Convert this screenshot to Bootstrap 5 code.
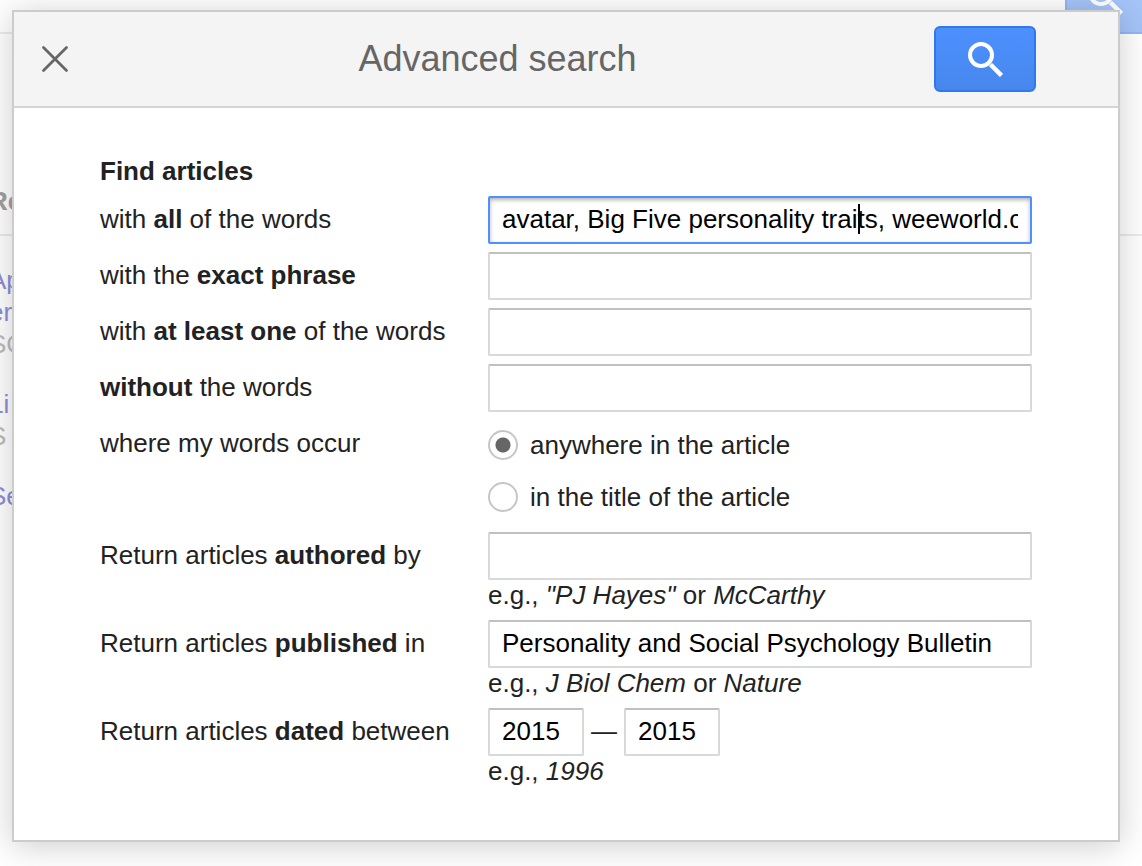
<!DOCTYPE html>
<html lang="en">
<head>
<meta charset="utf-8">
<meta name="viewport" content="width=device-width, initial-scale=1">
<title>Advanced search</title>
<link href="https://cdn.jsdelivr.net/npm/bootstrap@5.3.0/dist/css/bootstrap.min.css" rel="stylesheet">
<style>
  body { font-family: "Liberation Sans", Arial, sans-serif; font-size: 26px; line-height: 30px; color: #222; background: #fff; }

  /* dimmed results page behind the dialog */
  .backpage { z-index: 0; }
  .back-top { height: 34px; border-bottom: 2px solid #ebebeb; }
  .back-search { width: 77px; height: 34px; background: #a5c4f8; border: solid #92b6f5; border-width: 0 0 2px 2px; }
  .back-search svg { display: block; margin: -21px 0 0 20px; }
  .back-heading { padding: 151px 0 17px; border-bottom: 2px solid #ebebeb; font-weight: bold; color: #a0a0a0; }
  .back-list { margin-left: -11px; line-height: 32px; white-space: nowrap; }
  .back-item { padding-top: 28px; color: #bbb; }
  .back-item a { color: #8e8ed6; text-decoration: none; }

  .dialog-box { z-index: 1; margin: 10px 22px 24px 12px; border: 2px solid #ccc; background: #fff; box-shadow: 0 4px 32px rgba(0,0,0,.2); }
  .dialog-head { height: 96px; padding-right: 82px; background: #f4f4f4; border-bottom: 2px solid #d5d5d5; }
  .dialog-title { padding-right: 8px; font-size: 36px; line-height: 48px; font-weight: 400; color: #666; }
  .close-btn { width: 55px; height: 48px; }
  .search-btn { width: 102px; height: 66px; border: 2px solid #3079ed; border-radius: 6px; background: linear-gradient(#4d90fe, #4787ed); }

  .dialog-body { padding: 38px 86px 54px; }
  .form-title { font-size: 26px; line-height: 50px; font-weight: bold; }
  .field-label { flex: 0 0 388px; line-height: 46px; }
  .text-field { height: 48px; padding: 0 12px 2px; border: 2px solid #d9d9d9; border-top-color: #c0c0c0; border-radius: 2px; font-size: 26px; line-height: 30px; color: #000; background: #fff; }
  .text-field:focus { box-shadow: none; }
  .text-field.active-field { border-color: #4d90fe; box-shadow: inset 0 2px 4px rgba(0,0,0,.3); }
  .text-caret { left: 370px; top: 8px; width: 2px; height: 30px; background: #000; }
  .year-field { width: 96px; }
  .year-dash { width: 40px; line-height: 46px; }
  .hint-row { margin-bottom: 10px; }
  .radio-group { padding: 10px 0 20px; gap: 22px; }
  .radio-dot { appearance: none; width: 30px; height: 30px; margin: 0; border: 2px solid #c6c6c6; border-radius: 50%; background: #fff; }
  .radio-dot:checked { background: radial-gradient(circle, #666 0 7px, #fff 8px); }
</style>
</head>
<body class="position-relative overflow-hidden">

<div class="backpage position-absolute top-0 start-0 w-100 h-100 overflow-hidden" aria-hidden="true">
  <div class="back-top d-flex justify-content-end">
    <div class="back-search overflow-hidden">
      <svg width="36" height="36" viewBox="0 0 36 36" fill="none" stroke="#fff"><circle cx="14" cy="14" r="11" stroke-width="4"/><path d="M23.500 23.500L34.500 34.500" stroke-width="4.500"/></svg>
    </div>
  </div>
  <div class="back-list">
    <div class="back-heading">Re</div>
    <div class="back-item"><a href="#" tabindex="-1">Ap</a><br><a href="#" tabindex="-1">er</a><br>SC</div>
    <div class="back-item"><a href="#" tabindex="-1">Li</a><br>S</div>
    <div class="back-item"><a href="#" tabindex="-1">Se</a></div>
  </div>
</div>

<main class="dialog-box position-relative" role="dialog" aria-labelledby="dialog-title">
  <header class="dialog-head d-flex align-items-center">
    <button type="button" class="close-btn btn border-0 p-0 d-flex align-items-center justify-content-end" aria-label="Close">
      <svg width="28" height="28" viewBox="0 0 28 28" stroke="#666" stroke-width="2.800" stroke-linecap="round"><path d="M2.500 2.500L25.500 25.500M25.500 2.500L2.500 25.500"/></svg>
    </button>
    <h1 id="dialog-title" class="dialog-title flex-grow-1 text-center m-0">Advanced search</h1>
    <button type="submit" form="search-form" class="search-btn btn p-0 d-flex align-items-center justify-content-center" aria-label="Search">
      <svg width="36" height="36" viewBox="0 0 36 36" fill="none" stroke="#fff"><circle cx="14" cy="14" r="11" stroke-width="4"/><path d="M23.500 23.500L34.500 34.500" stroke-width="4.500"/></svg>
    </button>
  </header>

  <form id="search-form" class="dialog-body">
    <h2 class="form-title m-0">Find articles</h2>

    <div class="d-flex mb-2">
      <label class="field-label" for="all">with <b>all</b> of the words</label>
      <div class="position-relative flex-grow-1">
        <input id="all" type="text" class="form-control text-field active-field" value="avatar, Big Five personality traits, weeworld.com">
        <span class="text-caret position-absolute"></span>
      </div>
    </div>
    <div class="d-flex mb-2">
      <label class="field-label" for="exact">with the <b>exact phrase</b></label>
      <input id="exact" type="text" class="form-control text-field">
    </div>
    <div class="d-flex mb-2">
      <label class="field-label" for="any">with <b>at least one</b> of the words</label>
      <input id="any" type="text" class="form-control text-field">
    </div>
    <div class="d-flex mb-2">
      <label class="field-label" for="none"><b>without</b> the words</label>
      <input id="none" type="text" class="form-control text-field">
    </div>

    <div class="d-flex" role="radiogroup" aria-labelledby="occur">
      <span id="occur" class="field-label">where my words occur</span>
      <div class="radio-group d-flex flex-column">
        <label class="d-flex"><input type="radio" name="occurs" class="radio-dot me-2" checked><span class="ps-1">anywhere in the article</span></label>
        <label class="d-flex"><input type="radio" name="occurs" class="radio-dot me-2"><span class="ps-1">in the title of the article</span></label>
      </div>
    </div>

    <div class="d-flex hint-row">
      <label class="field-label" for="author">Return articles <b>authored</b> by</label>
      <div class="flex-grow-1">
        <input id="author" type="text" class="form-control text-field">
        <div>e.g., <i>"PJ Hayes"</i> or <i>McCarthy</i></div>
      </div>
    </div>
    <div class="d-flex hint-row">
      <label class="field-label" for="publication">Return articles <b>published</b> in</label>
      <div class="flex-grow-1">
        <input id="publication" type="text" class="form-control text-field" value="Personality and Social Psychology Bulletin">
        <div>e.g., <i>J Biol Chem</i> or <i>Nature</i></div>
      </div>
    </div>
    <div class="d-flex">
      <label class="field-label" for="year-from">Return articles <b>dated</b> between</label>
      <div class="flex-grow-1">
        <div class="d-flex">
          <input id="year-from" type="text" class="form-control text-field year-field" value="2015">
          <span class="year-dash text-center">—</span>
          <input type="text" class="form-control text-field year-field" value="2015" aria-label="End year">
        </div>
        <div>e.g., <i>1996</i></div>
      </div>
    </div>
  </form>
</main>

<script src="https://cdn.jsdelivr.net/npm/bootstrap@5.3.0/dist/js/bootstrap.bundle.min.js"></script>
</body>
</html>
